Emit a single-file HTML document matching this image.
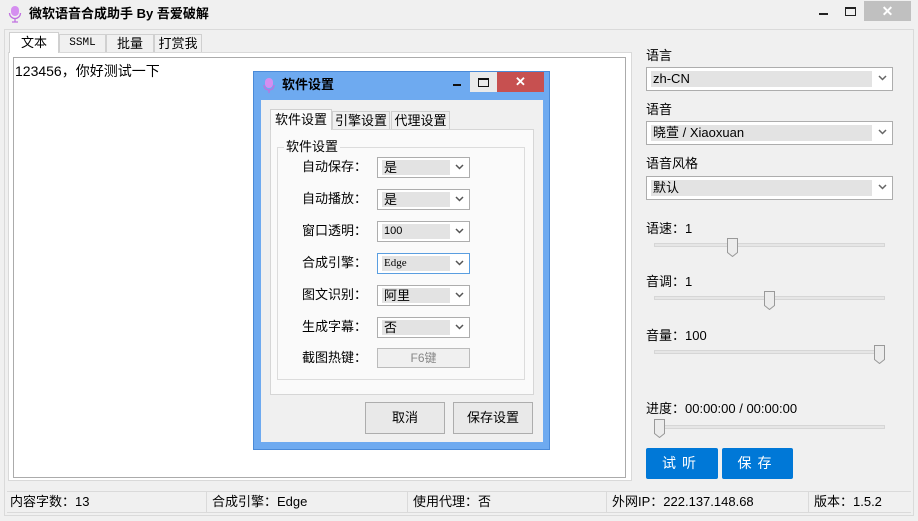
<!DOCTYPE html>
<html><head><meta charset="utf-8"><style>
*{box-sizing:border-box;margin:0;padding:0}
body{width:918px;height:521px;background:#f0f0f0;position:relative;overflow:hidden;font-family:"Liberation Sans","Noto Sans CJK SC",sans-serif;font-size:12px;color:#000;line-height:16px}
.a{position:absolute}
.combo{position:absolute;border:1px solid #adadad;background:#fff}
.combo .f{position:absolute;left:4px;top:3px;bottom:3px;right:20px;background:#e3e3e3;padding-left:2px;line-height:16px;font-size:13px}
.combo .ar{position:absolute;right:5px;top:50%;margin-top:-4px;width:9px;height:6px}
.track{position:absolute;height:4px;background:#e6e6e6;border:1px solid #d6d6d6}
.thumb{position:absolute;width:11px;height:19px}
.tab{position:absolute;border:1px solid #d0d0d0;border-bottom:none;background:#f0f0f0;text-align:center;font-size:13px}
.btn{position:absolute;border:1px solid #adadad;background:#e9e9e9;text-align:center;font-size:13px}
.lbl{position:absolute;font-size:13px;text-align:right;width:90px;line-height:16px}
.bb{position:absolute;background:#0078d7;color:#fff;text-align:center;font-size:14px;line-height:31px;border-radius:2px;letter-spacing:6px}
</style></head><body>
<svg class="a" style="left:8px;top:5px" width="14" height="18" viewBox="0 0 14 18"><rect x="3" y="1" width="8" height="10" rx="4" fill="#d58ef0"/><path d="M1.5 8a5.5 5.5 0 0 0 11 0M7 13.5v3M4 17h6" stroke="#c070e0" stroke-width="1.3" fill="none"/></svg>
<div class="a" style="left:29px;top:6px;font-size:13px;font-weight:bold">微软语音合成助手 By 吾爱破解</div>
<div class="a" style="left:819px;top:13px;width:9px;height:2px;background:#222"></div>
<div class="a" style="left:845px;top:7px;width:11px;height:9px;border:1px solid #222;border-top-width:2px"></div>
<div class="a" style="left:864px;top:1px;width:47px;height:20px;background:#c0c0c0;color:#fff;text-align:center;font-size:14px;line-height:20px;font-weight:bold">✕</div>
<div class="a" style="left:4px;top:29px;width:910px;height:487px;border:1px solid #dadada"></div>
<div class="a" style="left:8px;top:52px;width:624px;height:429px;background:#fff;border:1px solid #d9d9d9"></div>
<div class="tab" style="left:9px;top:32px;width:50px;height:21px;background:#fff;line-height:20px">文本</div>
<div class="tab" style="left:59px;top:34px;width:47px;height:18px;line-height:17px;font-size:11px;font-family:'Liberation Mono',monospace">SSML</div>
<div class="tab" style="left:106px;top:34px;width:48px;height:18px;line-height:17px">批量</div>
<div class="tab" style="left:154px;top:34px;width:48px;height:18px;line-height:17px">打赏我</div>
<div class="a" style="left:13px;top:57px;width:613px;height:421px;border:1px solid #ababab;background:#fff"></div>
<div class="a" style="left:15px;top:63px;font-size:14px">123456，你好测试一下</div>
<div class="a" style="left:646px;top:48px;font-size:13px">语言</div>
<div class="combo" style="left:646px;top:67px;width:247px;height:24px"><div class="f">zh-CN</div><svg class="ar" viewBox="0 0 9 6"><path d="M1 1l3.5 3.5L8 1" stroke="#666" stroke-width="1.5" fill="none"/></svg></div>
<div class="a" style="left:646px;top:102px;font-size:13px">语音</div>
<div class="combo" style="left:646px;top:121px;width:247px;height:24px"><div class="f">晓萱 / Xiaoxuan</div><svg class="ar" viewBox="0 0 9 6"><path d="M1 1l3.5 3.5L8 1" stroke="#666" stroke-width="1.5" fill="none"/></svg></div>
<div class="a" style="left:646px;top:156px;font-size:13px">语音风格</div>
<div class="combo" style="left:646px;top:176px;width:247px;height:24px"><div class="f">默认</div><svg class="ar" viewBox="0 0 9 6"><path d="M1 1l3.5 3.5L8 1" stroke="#666" stroke-width="1.5" fill="none"/></svg></div>
<div class="a" style="left:646px;top:221px;font-size:13px">语速：1</div>
<div class="track" style="left:654px;top:243px;width:231px"></div>
<svg class="thumb" style="left:727px;top:238px" viewBox="0 0 11 19"><path d="M.5.5h10v14l-5 4-5-4z" fill="#ececec" stroke="#999"/></svg>
<div class="a" style="left:646px;top:274px;font-size:13px">音调：1</div>
<div class="track" style="left:654px;top:296px;width:231px"></div>
<svg class="thumb" style="left:764px;top:291px" viewBox="0 0 11 19"><path d="M.5.5h10v14l-5 4-5-4z" fill="#ececec" stroke="#999"/></svg>
<div class="a" style="left:646px;top:328px;font-size:13px">音量：100</div>
<div class="track" style="left:654px;top:350px;width:231px"></div>
<svg class="thumb" style="left:874px;top:345px" viewBox="0 0 11 19"><path d="M.5.5h10v14l-5 4-5-4z" fill="#ececec" stroke="#999"/></svg>
<div class="a" style="left:646px;top:401px;font-size:13px">进度：00:00:00 / 00:00:00</div>
<div class="track" style="left:654px;top:425px;width:231px"></div>
<svg class="thumb" style="left:654px;top:419px" viewBox="0 0 11 19"><path d="M.5.5h10v14l-5 4-5-4z" fill="#ececec" stroke="#999"/></svg>
<div class="bb" style="left:646px;top:448px;width:72px">试听</div>
<div class="bb" style="left:722px;top:448px;width:71px">保存</div>
<div class="a" style="left:7px;top:491px;width:904px;height:22px;border-top:1px solid #dadada;border-bottom:1px solid #dadada"></div>
<div class="a" style="left:206px;top:491px;width:1px;height:22px;background:#dadada"></div>
<div class="a" style="left:407px;top:491px;width:1px;height:22px;background:#dadada"></div>
<div class="a" style="left:606px;top:491px;width:1px;height:22px;background:#dadada"></div>
<div class="a" style="left:808px;top:491px;width:1px;height:22px;background:#dadada"></div>
<div class="a" style="left:10px;top:494px;font-size:13px">内容字数：13</div>
<div class="a" style="left:212px;top:494px;font-size:13px">合成引擎：Edge</div>
<div class="a" style="left:413px;top:494px;font-size:13px">使用代理：否</div>
<div class="a" style="left:612px;top:494px;font-size:13px">外网IP：222.137.148.68</div>
<div class="a" style="left:814px;top:494px;font-size:13px">版本：1.5.2</div>
<div class="a" style="left:253px;top:71px;width:297px;height:379px;background:#6eaaf0;border:1px solid #4a8ad8"></div>
<svg class="a" style="left:263px;top:77px" width="12" height="17" viewBox="0 0 12 17"><rect x="2" y="1" width="8" height="10" rx="4" fill="#d58ef0"/><path d="M1 8a5 5 0 0 0 10 0M6 13v3" stroke="#c070e0" stroke-width="1.3" fill="none"/></svg>
<div class="a" style="left:282px;top:77px;font-size:13px;font-weight:bold">软件设置</div>
<div class="a" style="left:453px;top:84px;width:8px;height:2px;background:#111"></div>
<div class="a" style="left:470px;top:72px;width:27px;height:20px;background:#eaeaea"></div>
<div class="a" style="left:478px;top:78px;width:11px;height:9px;border:1px solid #111;border-top-width:2px"></div>
<div class="a" style="left:497px;top:72px;width:47px;height:20px;background:#c75050;color:#fff;text-align:center;font-size:13px;line-height:20px;font-weight:bold">✕</div>
<div class="a" style="left:261px;top:100px;width:282px;height:342px;background:#f0f0f0"></div>
<div class="a" style="left:270px;top:129px;width:264px;height:266px;background:#fafafa;border:1px solid #d6d6d6"></div>
<div class="tab" style="left:270px;top:109px;width:62px;height:21px;background:#fafafa;line-height:20px">软件设置</div>
<div class="tab" style="left:332px;top:111px;width:58px;height:18px;line-height:17px">引擎设置</div>
<div class="tab" style="left:391px;top:111px;width:59px;height:18px;line-height:17px">代理设置</div>
<div class="a" style="left:277px;top:147px;width:248px;height:233px;border:1px solid #dcdcdc"></div>
<div class="a" style="left:284px;top:139px;font-size:13px;background:#fafafa;padding:0 2px">软件设置</div>
<div class="lbl" style="left:277px;top:159px">自动保存：</div>
<div class="combo" style="left:377px;top:157px;width:93px;height:21px"><div class="f" style="right:19px;top:2px;bottom:2px;line-height:15px">是</div><svg class="ar" viewBox="0 0 9 6"><path d="M1 1l3.5 3.5L8 1" stroke="#555" stroke-width="1.5" fill="none"/></svg></div>
<div class="lbl" style="left:277px;top:191px">自动播放：</div>
<div class="combo" style="left:377px;top:189px;width:93px;height:21px"><div class="f" style="right:19px;top:2px;bottom:2px;line-height:15px">是</div><svg class="ar" viewBox="0 0 9 6"><path d="M1 1l3.5 3.5L8 1" stroke="#555" stroke-width="1.5" fill="none"/></svg></div>
<div class="lbl" style="left:277px;top:223px">窗口透明：</div>
<div class="combo" style="left:377px;top:221px;width:93px;height:21px"><div class="f" style="right:19px;top:2px;bottom:2px;font-size:11px;line-height:15px">100</div><svg class="ar" viewBox="0 0 9 6"><path d="M1 1l3.5 3.5L8 1" stroke="#555" stroke-width="1.5" fill="none"/></svg></div>
<div class="lbl" style="left:277px;top:255px">合成引擎：</div>
<div class="combo" style="left:377px;top:253px;width:93px;height:21px;border-color:#5a9ee0"><div class="f" style="right:19px;top:2px;bottom:2px;font-size:11px;line-height:15px;font-family:'Liberation Serif',serif">Edge</div><svg class="ar" viewBox="0 0 9 6"><path d="M1 1l3.5 3.5L8 1" stroke="#555" stroke-width="1.5" fill="none"/></svg></div>
<div class="lbl" style="left:277px;top:287px">图文识别：</div>
<div class="combo" style="left:377px;top:285px;width:93px;height:21px"><div class="f" style="right:19px;top:2px;bottom:2px;line-height:15px">阿里</div><svg class="ar" viewBox="0 0 9 6"><path d="M1 1l3.5 3.5L8 1" stroke="#555" stroke-width="1.5" fill="none"/></svg></div>
<div class="lbl" style="left:277px;top:319px">生成字幕：</div>
<div class="combo" style="left:377px;top:317px;width:93px;height:21px"><div class="f" style="right:19px;top:2px;bottom:2px;line-height:15px">否</div><svg class="ar" viewBox="0 0 9 6"><path d="M1 1l3.5 3.5L8 1" stroke="#555" stroke-width="1.5" fill="none"/></svg></div>
<div class="lbl" style="left:277px;top:350px">截图热键：</div>
<div class="a" style="left:377px;top:348px;width:93px;height:20px;border:1px solid #bbb;background:#f0f0f0;color:#888;text-align:center;line-height:18px;font-size:12px">F6键</div>
<div class="btn" style="left:365px;top:402px;width:80px;height:32px;line-height:30px">取消</div>
<div class="btn" style="left:453px;top:402px;width:80px;height:32px;line-height:30px">保存设置</div>
</body></html>
